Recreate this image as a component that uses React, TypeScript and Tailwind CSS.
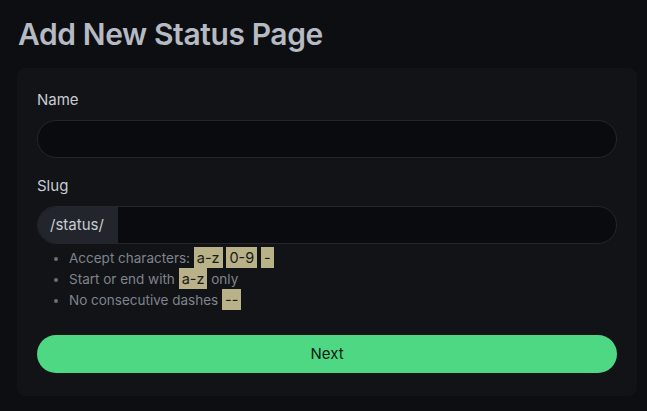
const Code = ({ children }: { children: React.ReactNode }) => (
  <span className="bg-[#b9b188] text-[#1b1b17] px-[3px] py-[2px] text-[14.5px] leading-none">{children}</span>
);

export default function App() {
  return (
    <div className="min-h-[411px] bg-[#0d0e11] pl-[17px] pr-[10px] pt-[14px] pb-[15px] font-['Inter',sans-serif]">
      <h1 className="text-[30px] leading-[40px] font-semibold text-[#b5bac3] pl-px tracking-[-0.4px]">
        Add New Status Page
      </h1>
      <div className="mt-[14px] rounded-lg bg-[#121317] px-5 pt-[20px] pb-[23px]">
        <label className="block text-[15px] leading-6 text-[#c8ccd3]">Name</label>
        <input className="mt-2 block h-[38px] w-full rounded-full border border-[#24262c] bg-[#0a0b0e] px-4 text-[15px] text-[#c8ccd3] outline-none" />

        <label className="mt-4 block text-[15px] leading-6 text-[#c8ccd3]">Slug</label>
        <div className="mt-2 flex h-[38px] w-full overflow-hidden rounded-full border border-[#24262c] bg-[#0a0b0e]">
          <span className="flex w-[80px] items-center bg-[#22252c] pl-[12px] text-[15px] text-[#c8ccd3]">
            /status/
          </span>
          <input className="flex-1 bg-transparent px-3 text-[15px] text-[#c8ccd3] outline-none" />
        </div>
        <ul className="mt-[4px] list-disc pl-[32px] text-[13.5px] leading-[21px] text-[#7f848d] marker:text-[#6b7078]">
          <li>
            Accept characters: <Code>a-z</Code> <Code>0-9</Code> <Code>-</Code>
          </li>
          <li>
            Start or end with <Code>a-z</Code> only
          </li>
          <li>
            No consecutive dashes <Code>--</Code>
          </li>
        </ul>

        <button className="mt-[24px] block h-[38px] w-full rounded-full bg-[#4ed884] text-[15px] text-[#0f1a13]">
          Next
        </button>
      </div>
    </div>
  );
}
